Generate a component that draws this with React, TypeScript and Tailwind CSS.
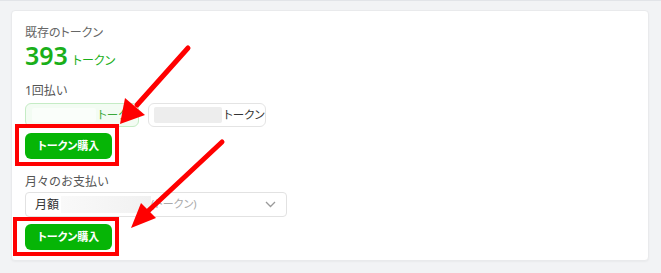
import React from "react";

const font = { fontFamily: '"Noto Sans", "Noto Sans CJK JP", sans-serif' };

export default function App() {
  return (
    <div
      className="relative w-[661px] h-[273px] bg-[#f2f3f5] border-t border-[#e2e4e8] pt-[9px] pl-[11px] overflow-hidden"
      style={font}
    >
      <div className="w-[638px] h-[251px] bg-white rounded-[4px] border border-[#e9eaec] shadow-[0_1px_2px_rgba(0,0,0,0.04)] pl-[13px] pt-[13px]">
        <div className="text-[12px] leading-[18px] text-[#666] [font-feature-settings:'palt']">既存のトークン</div>
        <div className="flex items-baseline h-[26px]">
          <span className="text-[25px] leading-[26px] font-semibold text-[#1aaf1a]">393</span>
          <span className="ml-[5px] text-[12px] text-[#1aaf1a] [font-feature-settings:'palt']">トークン</span>
        </div>
        <div className="mt-[14px] text-[12px] leading-[18px] text-[#555]">1回払い</div>
        <div className="flex gap-[9px] mt-[3px]">
          <div className="flex items-center w-[114px] h-[24px] rounded-[6px] border border-[#c5ecc5] bg-[#f3fcf3] pl-[6px] pr-[4px]">
            <div className="w-[64px] h-[14px] bg-[#fafefa] rounded-[2px] shrink-0"></div>
            <span className="ml-[2px] text-[11.5px] text-[#3aa83a] [font-feature-settings:'palt'] whitespace-nowrap">トークン</span>
          </div>
          <div className="flex items-center w-[118px] h-[24px] rounded-[6px] border border-[#e4e4e4] bg-white pl-[5px] pr-[4px]">
            <div className="w-[68px] h-[16px] bg-[#ededed] rounded-[2px] shrink-0"></div>
            <span className="ml-[2px] text-[11.5px] text-[#333] [font-feature-settings:'palt'] whitespace-nowrap">トークン</span>
          </div>
        </div>
        <button className="mt-[6px] w-[87px] h-[26px] rounded-[6px] bg-[#06b506] text-white text-[11px] font-bold [font-feature-settings:'palt']">
          トークン購入
        </button>
        <div className="mt-[14px] text-[12px] leading-[18px] text-[#555]">月々のお支払い</div>
        <div className="mt-[1px] flex items-center w-[262px] h-[25px] rounded-[4px] border border-[#e2e2e2] bg-white pl-[9px] pr-[10px]">
          <span className="text-[12px] text-[#333]">月額</span>
          <div className="ml-[2px] w-[90px] h-[17px] bg-gradient-to-r from-[#f9f9f9] to-[#f1f1f1]"></div>
          <span className="text-[11px] text-[#aaa] [font-feature-settings:'palt']">(トークン)</span>
          <svg className="ml-auto" width="11" height="7" viewBox="0 0 11 7">
            <path d="M1 1 L5.5 5.5 L10 1" fill="none" stroke="#9a9a9a" strokeWidth="1.3" />
          </svg>
        </div>
        <button className="mt-[7px] w-[87px] h-[26px] rounded-[6px] bg-[#06b506] text-white text-[11px] font-bold [font-feature-settings:'palt']">
          トークン購入
        </button>
      </div>

      {/* annotation boxes */}
      <div className="absolute left-[15px] top-[123px] w-[104px] h-[42px] border-[4px] border-[#ff0000]"></div>
      <div className="absolute left-[13px] top-[216px] w-[106px] h-[39px] border-[4px] border-[#ff0000]"></div>

      {/* arrows */}
      <svg className="absolute left-0 top-0" width="661" height="273" viewBox="0 0 661 273">
        <line x1="188" y1="47" x2="137" y2="104" stroke="#ff0000" strokeWidth="5" strokeLinecap="round" />
        <polygon points="120,123 125,97 145,114" fill="#ff0000" />
        <line x1="222" y1="141" x2="146" y2="212" stroke="#ff0000" strokeWidth="5" strokeLinecap="round" />
        <polygon points="131,227 141,202 156,217" fill="#ff0000" />
      </svg>
    </div>
  );
}
